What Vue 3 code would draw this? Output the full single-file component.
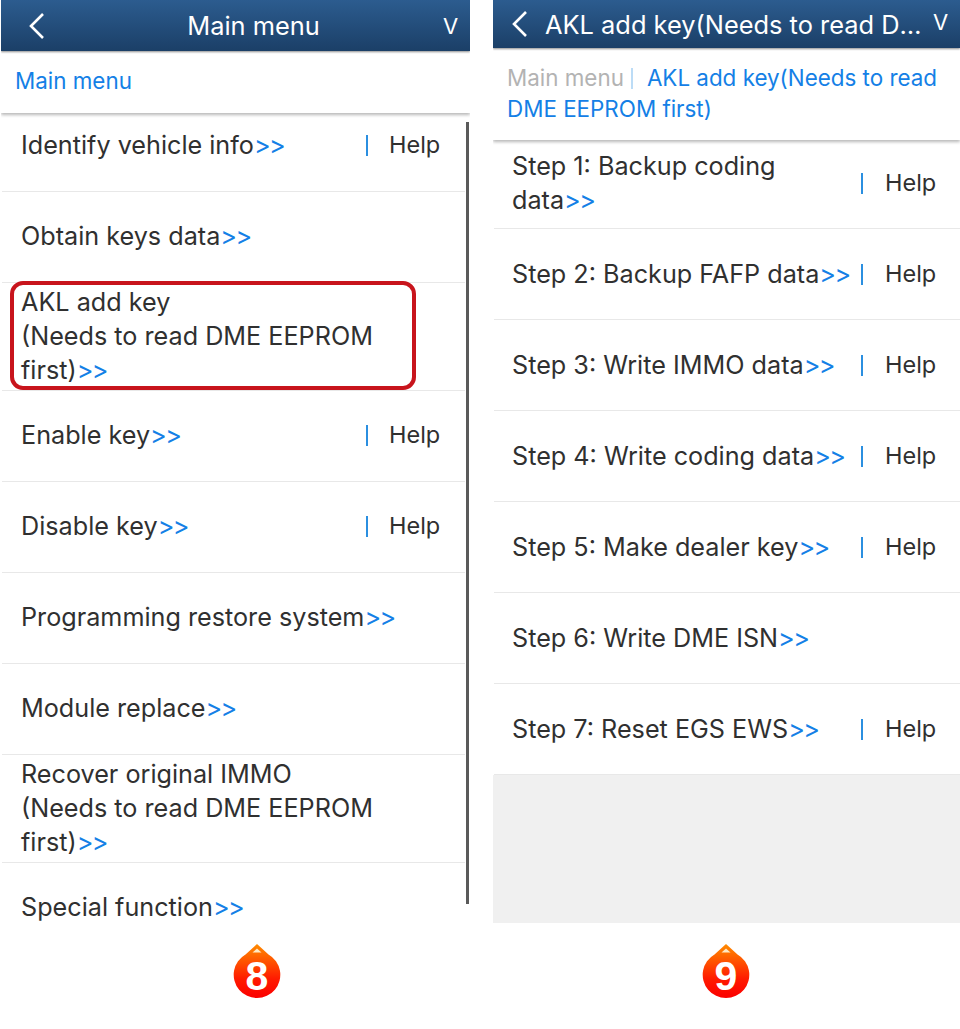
<script setup>
const leftRows = [
  { lines: ['Identify vehicle info'], help: true },
  { lines: ['Obtain keys data'] },
  { lines: ['AKL add key', '(Needs to read DME EEPROM', 'first)'], tall: true, marked: true },
  { lines: ['Enable key'], help: true },
  { lines: ['Disable key'], help: true },
  { lines: ['Programming restore system'] },
  { lines: ['Module replace'] },
  { lines: ['Recover original IMMO', '(Needs to read DME EEPROM', 'first)'], tall: true },
  { lines: ['Special function'] }
]
const rightRows = [
  { lines: ['Step 1: Backup coding data'], help: true },
  { lines: ['Step 2: Backup FAFP data'], help: true },
  { lines: ['Step 3: Write IMMO data'], help: true },
  { lines: ['Step 4: Write coding data'], help: true },
  { lines: ['Step 5: Make dealer key'], help: true },
  { lines: ['Step 6: Write DME ISN'] },
  { lines: ['Step 7: Reset EGS EWS'], help: true }
]
</script>

<template>
  <div class="page">
    <section class="col col-left">
      <div class="screen">
        <header class="bar bar-left">
          <svg class="back" width="18" height="28" viewBox="0 0 18 28"><path d="M15 2 L3 14 L15 26" fill="none" stroke="#fff" stroke-width="2.6" /></svg>
          <h1 class="title title-center">Main menu</h1>
          <span class="v">V</span>
        </header>
        <nav class="crumbs crumbs-left"><span class="crumb-on">Main menu</span></nav>
        <div class="list-wrap">
          <div class="list list-left">
            <div v-for="(r, i) in leftRows" :key="i" class="row" :class="{ tall: r.tall, marked: r.marked }">
              <div class="label">
                <template v-for="(l, j) in r.lines" :key="j"><br v-if="j" />{{ l }}</template><span class="arrows">&gt;&gt;</span>
              </div>
              <div v-if="r.help" class="help"><i class="tick"></i><span>Help</span></div>
            </div>
          </div>
          <div class="scroll"></div>
        </div>
      </div>
      <div class="badge-row badge-left">
        <svg width="50" height="58" viewBox="0 0 50 58">
          <defs><linearGradient id="dropA" x1="0" y1="0" x2="0" y2="1"><stop offset="0" stop-color="#ff8c00" /><stop offset="0.65" stop-color="#ff1a00" /><stop offset="1" stop-color="#fb0000" /></linearGradient></defs>
          <path d="M25 2 L36.500 12.500 A23.300 23.300 0 1 1 13.500 12.500 Z" fill="url(#dropA)" />
          <path d="M25 6.500 L29.500 10.500 L20.500 10.500 Z" fill="#ffe9c4" />
          <text x="25" y="48" text-anchor="middle" class="digit">8</text>
        </svg>
      </div>
    </section>

    <section class="col col-right">
      <div class="screen">
        <header class="bar bar-right">
          <svg class="back" width="18" height="28" viewBox="0 0 18 28"><path d="M15 2 L3 14 L15 26" fill="none" stroke="#fff" stroke-width="2.6" /></svg>
          <h1 class="title title-long">AKL add key(Needs to read DME EEPROM first)</h1>
          <span class="v v-up">V</span>
        </header>
        <nav class="crumbs crumbs-right"><span class="crumb-off">Main menu</span><i class="crumb-sep"></i><span class="crumb-on">AKL add key(Needs to read DME EEPROM first)</span></nav>
        <div class="list list-right">
          <div v-for="(r, i) in rightRows" :key="i" class="row">
            <div class="label">{{ r.lines[0] }}<span class="arrows">&gt;&gt;</span></div>
            <div v-if="r.help" class="help"><i class="tick"></i><span>Help</span></div>
          </div>
        </div>
        <div class="filler"></div>
      </div>
      <div class="badge-row badge-right">
        <svg width="50" height="58" viewBox="0 0 50 58">
          <defs><linearGradient id="dropB" x1="0" y1="0" x2="0" y2="1"><stop offset="0" stop-color="#ff8c00" /><stop offset="0.65" stop-color="#ff1a00" /><stop offset="1" stop-color="#fb0000" /></linearGradient></defs>
          <path d="M25 2 L36.500 12.500 A23.300 23.300 0 1 1 13.500 12.500 Z" fill="url(#dropB)" />
          <path d="M25 6.500 L29.500 10.500 L20.500 10.500 Z" fill="#ffe9c4" />
          <text x="25" y="48" text-anchor="middle" class="digit">9</text>
        </svg>
      </div>
    </section>
  </div>
</template>

<style scoped>
.page {
  width: 960px;
  height: 1029px;
  display: flex;
  background: #fff;
  font-family: Inter, "Noto Sans", sans-serif;
  color: #303030;
  overflow: hidden;
}
.col { display: flex; flex-direction: column; }
.col-left { width: 469px; margin-left: 1px; }
.col-right { width: 467px; margin-left: 23px; }
.screen { height: 923px; display: flex; flex-direction: column; overflow: hidden; }
.bar {
  position: relative;
  z-index: 3;
  flex: none;
  display: flex;
  align-items: center;
  color: #fff;
  background: linear-gradient(#2c5c8f, #1b3f67);
  box-shadow: 0 1px 2px rgba(0, 0, 0, .45);
}
.bar-left { height: 51px; padding: 0 12px 0 27px; }
.bar-right { height: 48px; padding: 0 12px 0 18px; }
.back { flex: none; }
.title { margin: 0; flex: 1; font-weight: 400; font-size: 25.4px; min-width: 0; }
.title-center { text-align: center; padding-left: 18px; }
.title-long { margin-left: 16px; margin-right: 4px; white-space: nowrap; overflow: hidden; text-overflow: ellipsis; }
.v { flex: none; font-size: 22px; width: 15px; text-align: center; }
.v-up { padding-bottom: 4px; }
.crumbs {
  position: relative;
  z-index: 2;
  flex: none;
  background: #fff;
  font-size: 22.4px;
  box-shadow: 0 2px 3px rgba(0, 0, 0, .28);
}
.crumbs-left { height: 62px; padding: 13px 0 0 14px; line-height: 34px; box-sizing: border-box; }
.crumbs-right { height: 92px; padding: 14px 10px 0 14px; line-height: 31px; box-sizing: border-box; }
.crumb-on { color: #1480e6; }
.crumb-off { color: #b3b3b3; }
.crumb-sep { display: inline-block; width: 2px; height: 21px; background: #bcdcf6; margin: 0 14px 0 7px; vertical-align: -3px; }
.list-wrap { position: relative; flex: 1; overflow: hidden; }
.list-left { margin-top: -12px; }
.list-right { margin-top: -2px; flex: none; }
.row {
  position: relative;
  box-sizing: border-box;
  height: 91px;
  display: flex;
  align-items: center;
  border-bottom: 1px solid #e8e8e8;
  font-size: 25.2px;
  line-height: 34px;
}
.list-left .row { padding-left: 19px; margin: 0 5px 0 1px; }
.list-right .row { padding-left: 18px; margin-left: 1px; }
.tall { height: 108px; }
.marked::before {
  content: "";
  position: absolute;
  left: 8px;
  top: -2px;
  width: 406px;
  height: 109px;
  box-sizing: border-box;
  border: 4px solid #c8141c;
  border-radius: 13px;
}
.label { flex: 1; min-width: 0; padding-bottom: 2px; }
.list-right .label { padding: 0 6px 0 0; }
.arrows { color: #1480e6; letter-spacing: -1.6px; }
.help { flex: none; display: flex; align-items: center; font-size: 23.5px; padding-bottom: 2px; }
.tick { display: block; width: 2px; height: 21px; background: #2b8fe0; }
.list-left .help { width: 99px; }
.list-left .help span { margin-left: 21px; }
.list-right .help { width: 99px; padding-bottom: 0; }
.list-right .help span { margin-left: 22px; }
.scroll { position: absolute; top: 9px; right: 1px; width: 3px; height: 782px; background: #5a5a5a; }
.filler { flex: 1; background: #f0f0f0; }
.badge-row { flex: 1; display: flex; padding-top: 19px; }
.badge-left { padding-left: 231px; }
.badge-right { padding-left: 208px; }
.digit { font-family: "Liberation Sans", sans-serif; font-weight: 700; font-size: 41px; fill: #fff; }
</style>
